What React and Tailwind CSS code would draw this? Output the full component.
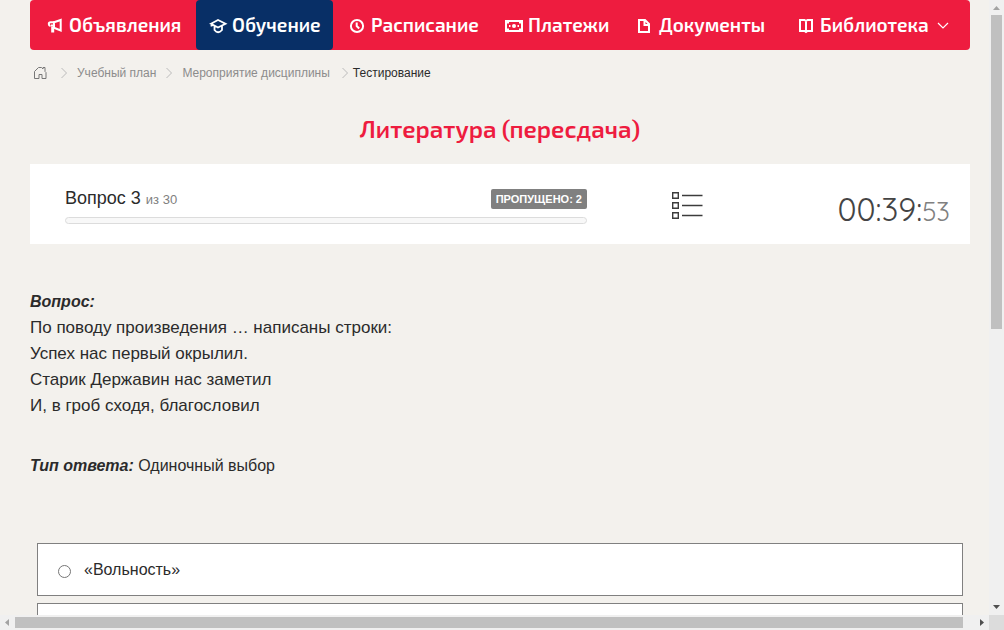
const navItems = [
  { label: "Объявления", icon: "horn", pad: "pl-[15px]" },
  { label: "Обучение", icon: "cap", active: true, pad: "pl-3" },
  { label: "Расписание", icon: "clock", pad: "pl-3.5" },
  { label: "Платежи", icon: "money", pad: "pl-3" },
  { label: "Документы", icon: "file", pad: "pl-3" },
  { label: "Библиотека", icon: "book", menu: true, pad: "pl-3" },
];

const glyphs = {
  horn: (
    <>
      <path d="M9 7.300 15.700 5v10.500L9 12.800Z" />
      <path d="M9 7.300H5.500Q3.800 7.300 3.800 9t1.700 2M6 10.500H9" />
      <path d="M7.700 11.500v6" strokeWidth="3" />
    </>
  ),
  cap: (
    <path strokeWidth="1.800" d="M3 8.700 10 5l7.500 3.700L10 12.500ZM6.500 11v4q3.500 4.500 7.500 0v-4M3.500 9v2.500" />
  ),
  clock: (
    <>
      <circle cx="10" cy="11" r="6.100" />
      <path d="M9.700 7.500V11l2.500 2.500" />
    </>
  ),
  money: (
    <>
      <path d="M2 6h16v10H2Z" />
      <circle cx="10" cy="11" r="2" fill="currentColor" stroke="none" />
      <path d="M2 6h3v2.500H2ZM15 6h3v2.500h-3ZM2 13.500h3V16H2ZM15 13.500h3V16h-3Z" fill="currentColor" stroke="none" />
      <path d="M5 10h1.500v2H5ZM13.500 10H15v2h-1.500Z" fill="currentColor" stroke="none" />
    </>
  ),
  file: <path d="M4 5h6l4 4v8H4ZM9.500 5v5H14" />,
  book: <path d="M4 5h4.500L10 6l1.500-1H16v11h-4.500L10 17l-1.500-1H4ZM10 6v12" />,
};

function NavIcon({ name }) {
  return (
    <svg viewBox="0 0 20 20" className="size-5 shrink-0" fill="none" stroke="currentColor" strokeWidth="2" aria-hidden="true">
      {glyphs[name]}
    </svg>
  );
}

function Separator() {
  return (
    <svg viewBox="0 0 8 12" className="h-3 w-2 shrink-0" fill="none" stroke="#bbb" aria-hidden="true">
      <path d="M1.500 1 6.500 6l-5 5" />
    </svg>
  );
}

function Answer({ children, id }) {
  return (
    <label htmlFor={id} className="flex h-[53px] items-center border border-[#808080] bg-white pl-5 text-base">
      <input
        id={id}
        type="radio"
        name="answer"
        className="mt-1 mr-[13px] size-[13px] shrink-0 appearance-none rounded-full border border-[#767676] bg-white checked:bg-[#767676]"
      />
      {children}
    </label>
  );
}

function Arrow({ d, dim }) {
  return (
    <svg viewBox="0 0 15 15" className={dim ? "size-[15px] shrink-0 text-[#a3a3a3]" : "size-[15px] shrink-0 text-[#505050]"} fill="currentColor" aria-hidden="true">
      <path d={d} />
    </svg>
  );
}

export default function App() {
  return (
    <div className="grid h-screen grid-cols-[minmax(0,1fr)_15px] grid-rows-[minmax(0,1fr)_15px] bg-[#f3f1ed] font-['Liberation_Sans',Arial,sans-serif] text-[#2b2b2b]">
      <div className="overflow-hidden pr-[19px] pl-[30px]">
        <nav className="grid h-[50px] grid-cols-[166fr_137fr_159fr_131fr_161fr_186fr] rounded bg-[#ee1c3f] font-['Exo_2','Noto_Sans',sans-serif] text-[19px] font-semibold text-white">
          {navItems.map((item) => (
            <a
              key={item.label}
              href="#"
              className={`flex items-center gap-1 rounded whitespace-nowrap ${item.pad} ${item.active ? "bg-[#082f66]" : ""}`}
            >
              <NavIcon name={item.icon} />
              {item.label}
              {item.menu && (
                <svg viewBox="0 0 12 12" className="ml-1 size-3 shrink-0" fill="none" stroke="currentColor" strokeWidth="1.2" aria-hidden="true">
                  <path d="M1 4 6 9l5-5" />
                </svg>
              )}
            </a>
          ))}
        </nav>

        <nav aria-label="Навигация" className="mt-4 flex h-[14px] items-center gap-[9px] pl-[3px] text-xs leading-[14px] text-[#8c8c8c]">
          <a href="#" aria-label="Главная" className="mr-1">
            <svg viewBox="0 0 14 14" className="size-[14px]" fill="none" stroke="#777" aria-hidden="true">
              <path d="M1.500 5.500 5.500 1.500h3l1.500 1.500V1.500h2v4l1 1v6H9v-4H6v4H1.500Z" />
            </svg>
          </a>
          <Separator />
          <a href="#">Учебный план</a>
          <Separator />
          <a href="#">Мероприятие дисциплины</a>
          <div className="ml-0.5 flex items-center gap-1">
            <Separator />
            <span className="text-[#2b2b2b]">Тестирование</span>
          </div>
        </nav>

        <h1 className="mt-[33px] text-center font-['Exo_2','Noto_Sans',sans-serif] text-2xl leading-8 font-semibold text-[#ee1c3f]">
          Литература (пересдача)
        </h1>

        <section className="mt-[19px] flex h-20 items-center bg-white pr-5 pl-[35px]">
          <div className="w-[522px]">
            <div className="flex items-center justify-between">
              <p className="text-lg leading-7">
                Вопрос 3 <span className="text-[13px] text-[#808080]">из 30</span>
              </p>
              <span className="rounded-[2px] bg-[#808080] px-[5px] text-[11px] leading-5 font-bold text-white">
                ПРОПУЩЕНО: 2
              </span>
            </div>
            <div role="progressbar" aria-valuenow={0} className="mt-[3px] h-[7px] rounded-full border border-[#dcdcdc] bg-[#f8f8f8]" />
          </div>
          <button type="button" aria-label="Список вопросов" className="mt-1 ml-[84px]">
            <svg viewBox="0 0 34 30" className="h-[30px] w-[34px]" fill="none" stroke="#3c3c3c" aria-hidden="true">
              <path strokeWidth="1.400" d="M1.700 1.700h5.600v5.600H1.700ZM1.700 11.700h5.600v5.600H1.700ZM1.700 21.700h5.600v5.600H1.700Z" />
              <path strokeWidth="1.300" d="M11 4.500h20.500M11 14.500h20.500M11 24.500h20.500" />
            </svg>
          </button>
          <time className="mt-3 ml-auto font-['Quicksand','Lato',sans-serif] text-[32px] leading-10 font-normal text-[#444]">
            00:39:<span className="text-[26px] text-[#808080]">53</span>
          </time>
        </section>

        <section className="mt-[45px] text-[17px] leading-[26px]">
          <h2 className="text-base leading-[26px] font-bold italic">Вопрос:</h2>
          <p>По поводу произведения … написаны строки:</p>
          <p>Успех нас первый окрылил.</p>
          <p>Старик Державин нас заметил</p>
          <p>И, в гроб сходя, благословил</p>
        </section>
        <p className="mt-[34px] text-base leading-[26px]">
          <strong className="italic">Тип ответа:</strong> Одиночный выбор
        </p>

        <form className="mx-[7px] mt-[64px] flex flex-col gap-[7px]">
          <Answer id="answer-1">«Вольность»</Answer>
          <Answer id="answer-2" />
        </form>
      </div>

      <div className="flex flex-col items-center bg-[#f0f0f0]" aria-hidden="true">
        <Arrow dim d="M4 10h7L7.500 6Z" />
        <div className="w-[11px] flex-[314] bg-[#c0c0c0]" />
        <div className="flex-[271]" />
        <Arrow d="M4 5h7L7.500 9Z" />
      </div>
      <div className="flex items-center bg-[#f0f0f0]" aria-hidden="true">
        <Arrow dim d="M9 4v7L5 7.500Z" />
        <div className="h-[11px] flex-[948] bg-[#c0c0c0]" />
        <div className="flex-[11]" />
        <Arrow d="M6 4v7l4-3.500Z" />
      </div>
      <div className="bg-[#dcdcdc]" />
    </div>
  );
}
